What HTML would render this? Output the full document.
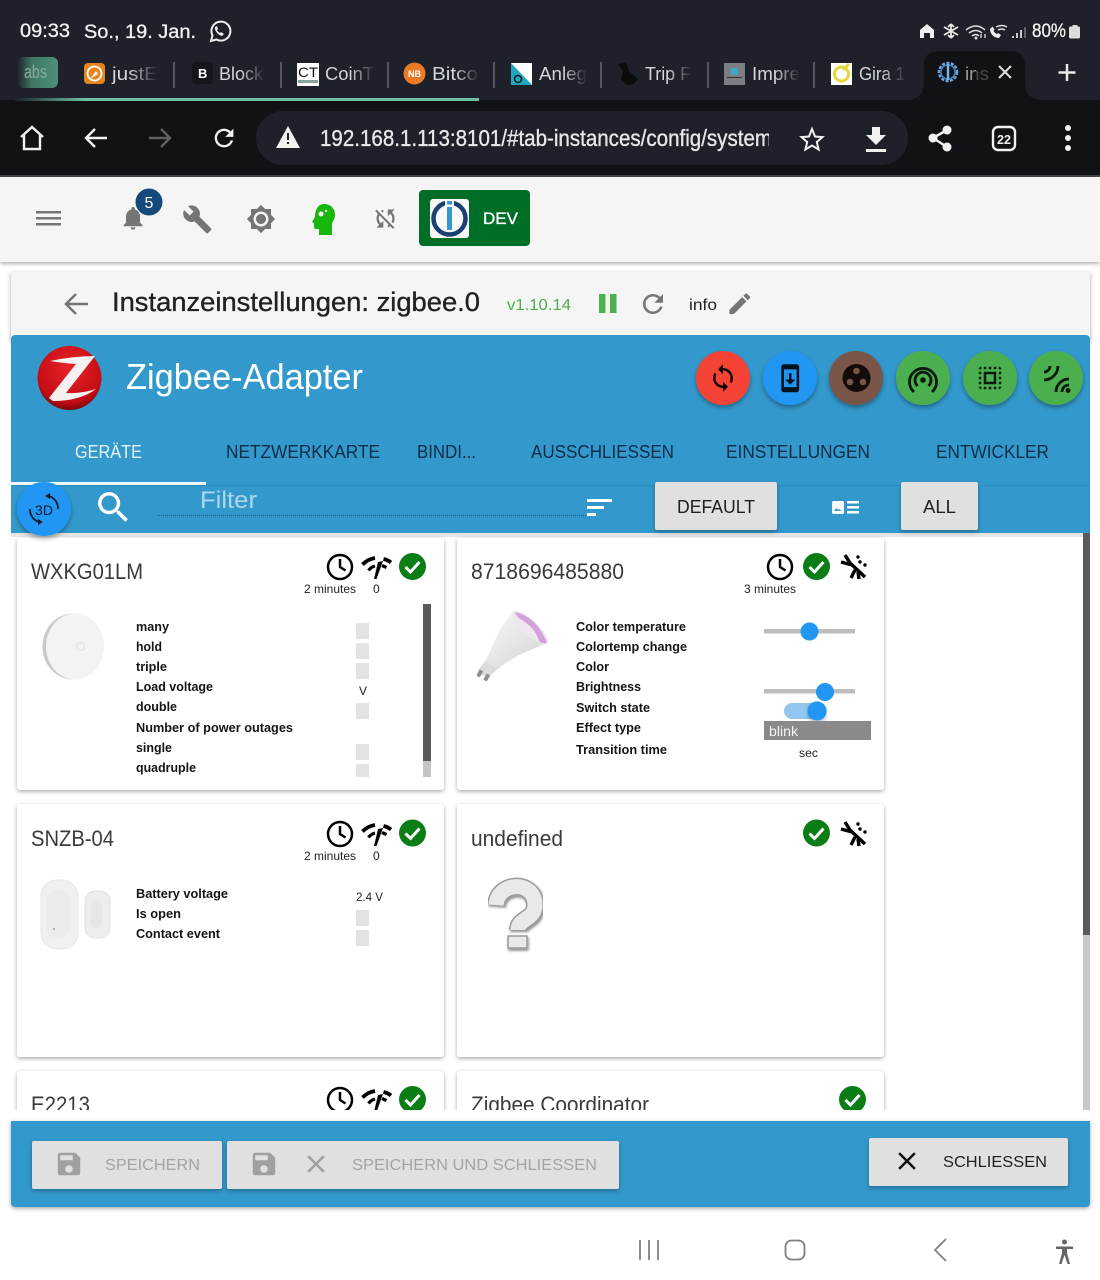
<!DOCTYPE html>
<html lang="de"><head><meta charset="utf-8"><title>Instanzeinstellungen: zigbee.0</title>
<style>
html,body{margin:0;padding:0;background:#fff;width:1100px;height:1280px;overflow:hidden}
svg{display:block}
text{font-family:"Liberation Sans",sans-serif;white-space:pre}
.l{font-size:13px;font-weight:700;fill:#151515}
.s{font-size:12px;fill:#222}
.t{font-size:22px;fill:#3a3a3a}
.tab{font-size:18px;fill:#0d2d47}
.bt{font-size:18px;fill:#d2d4d6}
</style></head><body>
<svg width="1100" height="1280" viewBox="0 0 1100 1280" xmlns="http://www.w3.org/2000/svg">
<defs>
<filter id="sh" x="-5%" y="-5%" width="110%" height="112%"><feDropShadow dx="0" dy="1.5" stdDeviation="2" flood-color="#000" flood-opacity=".35"/></filter>
<filter id="sh2" x="-20%" y="-20%" width="140%" height="150%"><feDropShadow dx="0" dy="2.5" stdDeviation="2.5" flood-color="#000" flood-opacity=".35"/></filter>
<filter id="sh3" x="-10%" y="-20%" width="120%" height="150%"><feDropShadow dx="0" dy="2" stdDeviation="2.5" flood-color="#000" flood-opacity=".3"/></filter>
<filter id="qs" x="-20%" y="-20%" width="140%" height="140%"><feDropShadow dx="1" dy="2" stdDeviation="1.2" flood-color="#000" flood-opacity=".45"/></filter>
<linearGradient id="fade"><stop offset="0" stop-color="#1e212a" stop-opacity="0"/><stop offset="1" stop-color="#1e212a"/></linearGradient>
<linearGradient id="pill"><stop offset="0" stop-color="#1e212a"/><stop offset=".35" stop-color="#3f7565"/><stop offset="1" stop-color="#4f8f7c"/></linearGradient>
<linearGradient id="prog"><stop offset="0" stop-color="#1e212a"/><stop offset=".15" stop-color="#6cbfa4"/><stop offset="1" stop-color="#6cbfa4"/></linearGradient>
<radialGradient id="zb" cx=".5" cy=".35" r=".7"><stop offset="0" stop-color="#e8232a"/><stop offset=".75" stop-color="#c40d14"/><stop offset="1" stop-color="#5e0508"/></radialGradient>
<linearGradient id="bulb" x1="0" y1="0" x2="1" y2="1"><stop offset="0" stop-color="#f8f8f8"/><stop offset="1" stop-color="#d4d4d4"/></linearGradient>
<clipPath id="urlclip"><rect x="300" y="115" width="469" height="46"/></clipPath>
<clipPath id="scroll"><rect x="11" y="533" width="1072" height="577"/></clipPath>
</defs>

<!-- top chrome -->
<rect width="1100" height="100" fill="#1e212a"/>
<rect y="100" width="1100" height="77" fill="#101216"/>
<rect y="175" width="1100" height="2" fill="#43464b"/>

<!-- status bar -->
<text x="20" y="37" font-size="19" fill="#f2f2f2" stroke="#f2f2f2" stroke-width=".3" textLength="50" lengthAdjust="spacingAndGlyphs">09:33</text>
<text x="84" y="38" font-size="19" fill="#f2f2f2" stroke="#f2f2f2" stroke-width=".3" textLength="112" lengthAdjust="spacingAndGlyphs">So., 19. Jan.</text>
<g fill="none" stroke="#eee" stroke-width="2"><path d="M211 41l1.500-5.500a9.500 9.500 0 1 1 4 4z"/><path d="M215 27c-1 3 3 8 7 9l2-2-3-2-1 1c-1-.5-2.500-2-3-3l1-1-1-3z" fill="#eee" stroke="none"/></g>
<path d="M920 38v-8l7-6 7 6v8h-4v-5h-6v5z" fill="#f0f0f0"/>
<g fill="none" stroke="#e8e8e8" stroke-width="1.800"><path d="M951 24v14M944 27l14 8M958 27l-14 8M951 24l-3 3M951 24l3 3M951 38l-3-3M951 38l3-3"/></g>
<g fill="none" stroke="#e0e0e0" stroke-width="1.500"><path d="M966 30q10-8 19 0M969 33q7-5 13 0M972 36q4-3 7 0"/></g><path d="M981 38v-4M985 34v4" stroke="#ddd" stroke-width="1.300"/><circle cx="976" cy="38" r="1.500" fill="#e0e0e0"/>
<path d="M990 29c0 5 4 9 9 9l2-3-3-2-1 1c-1.500-.5-3-2-3.500-3.500l1-1-2-3z" fill="#eee"/><path d="M996 27q6-3 11 0M998 30q3.500-2 7 0" fill="none" stroke="#ddd" stroke-width="1.500"/>
<path d="M1013 38v-2M1017 38v-5M1021 38v-8" stroke="#ddd" stroke-width="1.800"/><path d="M1025 38V27" stroke="#777" stroke-width="1.500"/>
<text x="1032" y="37" font-size="19" fill="#f2f2f2" stroke="#f2f2f2" stroke-width=".3" textLength="34" lengthAdjust="spacingAndGlyphs">80%</text>
<path d="M1069 28a1.500 1.500 0 0 1 1.500-1.500h2v-1.500h5v1.500h1a1.500 1.500 0 0 1 1.500 1.500v9a1.500 1.500 0 0 1-1.500 1.500h-8a1.500 1.500 0 0 1-1.500-1.500z" fill="#ddd"/>

<!-- tabs -->
<rect x="17" y="57" width="41" height="31" rx="6" fill="url(#pill)"/>
<text x="24" y="78" font-size="18" fill="#88a9a0" textLength="23" lengthAdjust="spacingAndGlyphs">abs</text>
<g fill="#54575d"><rect x="173" y="62" width="2" height="26"/><rect x="280" y="62" width="2" height="26"/><rect x="387" y="62" width="2" height="26"/><rect x="493" y="62" width="2" height="26"/><rect x="600" y="62" width="2" height="26"/><rect x="707" y="62" width="2" height="26"/><rect x="813" y="62" width="2" height="26"/></g>
<rect x="84" y="63" width="21" height="21" rx="4" fill="#e8841e"/><circle cx="94.500" cy="73.500" r="7" fill="none" stroke="#fff" stroke-width="1.800"/><path d="M90 79l6-8 2 3z" fill="#fff"/>
<rect x="192" y="62" width="21" height="22" rx="4" fill="#14161c"/><text x="198" y="78" font-size="13" font-weight="700" fill="#fff">B</text>
<rect x="297" y="63" width="22" height="23" fill="#fff"/><text x="298" y="77" font-size="14" fill="#111" textLength="20" lengthAdjust="spacingAndGlyphs">CT</text><rect x="298" y="80" width="20" height="3" fill="#8aa5a0"/>
<circle cx="414.500" cy="73.500" r="11" fill="#ec7a23"/><text x="408" y="77" font-size="9" font-weight="700" fill="#fff" textLength="13" lengthAdjust="spacingAndGlyphs">NB</text>
<path d="M511 63h21v22h-21z" fill="#fff"/><path d="M511 63l21 22h-21z" fill="#1ea7c2"/><circle cx="518" cy="79" r="3.500" fill="none" stroke="#111" stroke-width="1.500"/>
<path d="M618 64l8-2 3 9 9 8-4 5-7 1-6-6 2-8z" fill="#0c0c0d"/>
<rect x="724" y="63" width="21" height="22" fill="#7b7f83"/><rect x="731" y="68" width="7" height="7" rx="2" fill="#36acc6"/><rect x="727" y="77" width="15" height="1" fill="#333"/>
<rect x="831" y="63" width="21" height="22" fill="#fff"/><circle cx="841.500" cy="74" r="7" fill="none" stroke="#e5d63a" stroke-width="3"/><path d="M843 70l6-6" stroke="#e5d63a" stroke-width="3"/>
<text x="112" y="80" class="bt" textLength="46" lengthAdjust="spacingAndGlyphs">justE</text><rect x="128" y="60" width="30" height="28" fill="url(#fade)"/>
<text x="219" y="80" class="bt" textLength="44" lengthAdjust="spacingAndGlyphs">Block</text><rect x="240" y="60" width="25" height="28" fill="url(#fade)"/>
<text x="325" y="80" class="bt" textLength="49" lengthAdjust="spacingAndGlyphs">CoinT</text><rect x="350" y="60" width="25" height="28" fill="url(#fade)"/>
<text x="432" y="80" class="bt" textLength="46" lengthAdjust="spacingAndGlyphs">Bitco</text><rect x="455" y="60" width="24" height="28" fill="url(#fade)"/>
<text x="539" y="80" class="bt" textLength="48" lengthAdjust="spacingAndGlyphs">Anleg</text><rect x="563" y="60" width="24" height="28" fill="url(#fade)"/>
<text x="645" y="80" class="bt" textLength="46" lengthAdjust="spacingAndGlyphs">Trip F</text><rect x="668" y="60" width="24" height="28" fill="url(#fade)"/>
<text x="752" y="80" class="bt" textLength="48" lengthAdjust="spacingAndGlyphs">Impre</text><rect x="775" y="60" width="25" height="28" fill="url(#fade)"/>
<text x="859" y="80" class="bt" textLength="46" lengthAdjust="spacingAndGlyphs">Gira 1</text><rect x="882" y="60" width="24" height="28" fill="url(#fade)"/>
<path d="M906 100q18 0 18-18V66q0-15 15-15h71q15 0 15 15v16q0 18 18 18z" fill="#101216"/>
<circle cx="948" cy="72" r="9" fill="none" stroke="#6ea5d8" stroke-width="2.500" stroke-dasharray="3 1.500"/><circle cx="948" cy="72" r="7" fill="none" stroke="#3f7fc0" stroke-width="1.500"/><rect x="946.800" y="64" width="2.400" height="16" fill="#7ab8e8"/>
<text x="965" y="80" font-size="18" fill="#9a9ca0" textLength="24" lengthAdjust="spacingAndGlyphs">ins</text><rect x="976" y="60" width="14" height="28" fill="#101216" opacity=".6"/>
<path d="M999 66l12 12M1011 66l-12 12" stroke="#ddd" stroke-width="2"/>
<path d="M1067 64v17M1058.500 72.500h17" stroke="#e8e8e8" stroke-width="2.500"/>
<rect x="15" y="98" width="464" height="3" fill="url(#prog)"/>

<!-- toolbar -->
<g fill="none" stroke="#f1f1f1" stroke-width="2.400"><path d="M21 137l11-10 11 10M24 135v14h16v-14"/></g>
<path d="M107 138H87M95 129l-9 9 9 9" fill="none" stroke="#f1f1f1" stroke-width="2.400"/>
<path d="M149 138h20M161 129l9 9-9 9" fill="none" stroke="#5e6064" stroke-width="2.400"/>
<g transform="translate(210,124) scale(1.170)"><path fill="#f1f1f1" d="M17.650 6.350C16.200 4.900 14.210 4 12 4c-4.420 0-7.990 3.580-7.990 8s3.570 8 7.990 8c3.730 0 6.840-2.550 7.730-6h-2.080c-.82 2.330-3.040 4-5.650 4-3.310 0-6-2.690-6-6s2.690-6 6-6c1.660 0 3.140.69 4.220 1.780L13 11h7V4l-2.350 2.350z"/></g>
<rect x="256" y="111" width="652" height="54" rx="27" fill="#1e2129"/>
<path d="M288 126l12 22h-24z" fill="#f1f1f1"/><rect x="287" y="133" width="2" height="7" fill="#1e2129"/><rect x="287" y="142" width="2" height="2" fill="#1e2129"/>
<g clip-path="url(#urlclip)"><text x="320" y="146" font-size="23" fill="#e6e7e8" stroke="#e6e7e8" stroke-width=".35" textLength="452" lengthAdjust="spacingAndGlyphs">192.168.1.113:8101/#tab-instances/config/system</text></g>
<path d="M812 129l3 7.500 7.500.6-5.700 4.900 1.800 7.500-6.600-4-6.600 4 1.800-7.500-5.700-4.900 7.500-.6z" fill="none" stroke="#f1f1f1" stroke-width="2"/>
<path d="M872 127h8v8h6l-10 10-10-10h6zM866 149h20v3h-20z" fill="#f1f1f1"/>
<g fill="#f1f1f1"><circle cx="947" cy="130" r="4.500"/><circle cx="933" cy="138" r="4.500"/><circle cx="947" cy="147" r="4.500"/></g><path d="M947 130l-14 8 14 9" fill="none" stroke="#f1f1f1" stroke-width="2.500"/>
<rect x="993" y="127" width="22" height="23" rx="5" fill="none" stroke="#f1f1f1" stroke-width="2.400"/><text x="997" y="144" font-size="13" font-weight="700" fill="#f1f1f1" textLength="14" lengthAdjust="spacingAndGlyphs">22</text>
<g fill="#f1f1f1"><circle cx="1068" cy="128" r="3"/><circle cx="1068" cy="138" r="3"/><circle cx="1068" cy="148" r="3"/></g>

<!-- app header -->
<rect y="177" width="1100" height="85" fill="#f5f5f5" filter="url(#sh)"/>
<g fill="#757575"><rect x="36" y="211" width="25" height="2.500"/><rect x="36" y="217" width="25" height="2.500"/><rect x="36" y="223" width="25" height="2.500"/></g>
<g transform="translate(119,204) scale(1.170)"><path fill="#757575" d="M12 22c1.100 0 2-.9 2-2h-4c0 1.100.9 2 2 2zm6-6v-5c0-3.070-1.630-5.640-4.500-6.320V4c0-.83-.67-1.500-1.500-1.500s-1.500.67-1.500 1.500v.68C7.640 5.360 6 7.920 6 11v5l-2 2v1h16v-1l-2-2z"/></g>
<circle cx="149" cy="202" r="13.500" fill="#164a7a"/><text x="144.500" y="208" font-size="16" fill="#fff">5</text>
<g transform="translate(182,204) scale(1.280)"><path fill="#757575" d="M22.700 19l-9.100-9.100c.9-2.300.4-5-1.500-6.900-2-2-5-2.400-7.400-1.300L9 6 6 9 1.600 4.700C.4 7.100.9 10.100 2.900 12.100c1.900 1.900 4.600 2.400 6.900 1.500l9.100 9.100c.4.400 1 .4 1.400 0l2.300-2.300c.5-.4.5-1.100.1-1.400z"/></g>
<g transform="translate(246,204) scale(1.250)"><path fill="#757575" d="M20 15.310L23.310 12 20 8.690V4h-4.690L12 .69 8.690 4H4v4.690L.69 12 4 15.310V20h4.690L12 23.310 15.310 20H20v-4.690zM12 18c-3.310 0-6-2.690-6-6s2.690-6 6-6 6 2.690 6 6-2.690 6-6 6zm0-10c-2.210 0-4 1.790-4 4s1.790 4 4 4 4-1.790 4-4-1.790-4-4-4z"/></g>
<path d="M324 204c7 0 11 5 11 11 0 4-2 6-3 8v12h-13v-6h-3c-1.500 0-2-1-2-2v-4l-2-1 3-5c0-7 3-13 9-13z" fill="#17b70c"/><circle cx="321" cy="214" r="2.500" fill="#f5f5f5"/><circle cx="326" cy="211" r="1.200" fill="#f5f5f5"/>
<g transform="translate(372,205) scale(1.130)"><path fill="#757575" d="M10 6.350V4.260c-.8.210-1.550.54-2.230.96l1.460 1.460c.25-.12.5-.24.77-.33zm-7.140-.94l2.360 2.360C4.450 8.990 4 10.440 4 12c0 2.210.91 4.200 2.360 5.640L4 20h6v-6l-2.240 2.240C6.680 15.150 6 13.660 6 12c0-1 .25-1.940.68-2.770l8.080 8.080c-.25.130-.5.250-.77.340v2.090c.8-.21 1.550-.54 2.230-.96l2.360 2.360 1.270-1.270L4.140 4.140 2.860 5.410zM20 4h-6v6l2.240-2.240C17.320 8.850 18 10.340 18 12c0 1-.25 1.940-.68 2.770l1.460 1.460C19.550 15.010 20 13.560 20 12c0-2.210-.91-4.200-2.360-5.640L20 4z"/></g>
<rect x="419" y="190" width="111" height="56" rx="4" fill="#006e27"/>
<rect x="430" y="199" width="39" height="39" rx="3" fill="#f8f8f8"/>
<circle cx="449.500" cy="218.500" r="16" fill="none" stroke="#1b3f73" stroke-width="4.500"/><rect x="445" y="199" width="9" height="31" fill="#f8f8f8"/><rect x="447" y="207" width="5" height="23" fill="#3399cc"/><rect x="447" y="201" width="5" height="3.500" fill="#3399cc"/>
<text x="483" y="224" font-size="17" fill="#fff" stroke="#fff" stroke-width=".35" textLength="35" lengthAdjust="spacingAndGlyphs">DEV</text>

<!-- dialog title -->
<rect x="11" y="272" width="1079" height="70" fill="#f5f5f5" filter="url(#sh)"/>
<path d="M88 304H67M76 294l-10 10 10 10" fill="none" stroke="#757575" stroke-width="2.500"/>
<text x="112" y="311" font-size="27" fill="#212121" stroke="#212121" stroke-width=".35" textLength="368" lengthAdjust="spacingAndGlyphs">Instanzeinstellungen: zigbee.0</text>
<text x="507" y="310" font-size="16" fill="#4caf50" textLength="64" lengthAdjust="spacingAndGlyphs">v1.10.14</text>
<rect x="599" y="294" width="6.500" height="19" fill="#4caf50"/><rect x="610" y="294" width="6.500" height="19" fill="#4caf50"/>
<g transform="translate(638,289) scale(1.250)"><path fill="#757575" d="M17.650 6.350C16.200 4.900 14.210 4 12 4c-4.420 0-7.990 3.580-7.990 8s3.570 8 7.990 8c3.730 0 6.840-2.550 7.730-6h-2.080c-.82 2.330-3.040 4-5.650 4-3.310 0-6-2.690-6-6s2.690-6 6-6c1.660 0 3.140.69 4.220 1.780L13 11h7V4l-2.350 2.350z"/></g>
<text x="689" y="310" font-size="16" fill="#212121" textLength="28" lengthAdjust="spacingAndGlyphs">info</text>
<g transform="translate(726,290) scale(1.150)"><path fill="#757575" d="M3 17.250V21h3.750L17.810 9.940l-3.750-3.750L3 17.250zM20.710 7.040c.39-.39.39-1.020 0-1.410l-2.340-2.340c-.39-.39-1.020-.39-1.410 0l-1.830 1.830 3.750 3.750 1.830-1.830z"/></g>

<!-- content background -->
<rect x="11" y="533" width="1079" height="590" fill="#fff"/>
<rect x="11" y="533" width="1079" height="4" fill="#ccc" opacity=".5"/>
<rect x="1083" y="533" width="7" height="402" fill="#5a5a5a"/><rect x="1083" y="935" width="7" height="175" fill="#c8c8c8"/>

<!-- cards -->
<g clip-path="url(#scroll)">
<rect x="17" y="538" width="427" height="252" rx="3" fill="#fff" filter="url(#sh)"/>
<rect x="457" y="538" width="427" height="252" rx="3" fill="#fff" filter="url(#sh)"/>
<rect x="17" y="804" width="427" height="253" rx="3" fill="#fff" filter="url(#sh)"/>
<rect x="457" y="804" width="427" height="253" rx="3" fill="#fff" filter="url(#sh)"/>
<rect x="17" y="1071" width="427" height="253" rx="3" fill="#fff" filter="url(#sh)"/>
<rect x="457" y="1071" width="427" height="253" rx="3" fill="#fff" filter="url(#sh)"/>

<!-- card titles -->
<text x="31" y="579" class="t" textLength="112" lengthAdjust="spacingAndGlyphs">WXKG01LM</text>
<text x="471" y="579" class="t" textLength="153" lengthAdjust="spacingAndGlyphs">8718696485880</text>
<text x="31" y="846" class="t" textLength="83" lengthAdjust="spacingAndGlyphs">SNZB-04</text>
<text x="471" y="846" class="t" textLength="92" lengthAdjust="spacingAndGlyphs">undefined</text>
<text x="31" y="1112" class="t" textLength="59" lengthAdjust="spacingAndGlyphs">E2213</text>
<text x="471" y="1112" class="t" textLength="178" lengthAdjust="spacingAndGlyphs">Zigbee Coordinator</text>

<!-- clocks -->
<g fill="none" stroke="#000" stroke-width="2.500"><circle cx="340" cy="567" r="12"/><path d="M340 559v8l5.500 3.500"/><circle cx="780" cy="567" r="12"/><path d="M780 559v8l5.500 3.500"/><circle cx="340" cy="834" r="12"/><path d="M340 826v8l5.500 3.500"/><circle cx="340" cy="1100" r="12"/><path d="M340 1092v8l5.500 3.500"/></g>
<!-- signal -->
<g>
<path d="M362.500 564.500Q368 559 375 558M383.500 559Q388 560 391 562.500" fill="none" stroke="#000" stroke-width="3.800"/>
<path d="M368.500 570.500Q371 567 375 566M382 565.500L386.500 567.500" fill="none" stroke="#000" stroke-width="3.200"/>
<path d="M374 579l2.500 0 6.500-18-5 1z" fill="#000"/>
</g>
<g>
<path d="M362.500 831.500Q368 826 375 825M383.500 826Q388 827 391 829.500" fill="none" stroke="#000" stroke-width="3.800"/>
<path d="M368.500 837.500Q371 834 375 833M382 832.500L386.500 834.500" fill="none" stroke="#000" stroke-width="3.200"/>
<path d="M374 846l2.500 0 6.500-18-5 1z" fill="#000"/>
</g>
<g>
<path d="M362.500 1097.500Q368 1092 375 1091M383.500 1092Q388 1093 391 1095.500" fill="none" stroke="#000" stroke-width="3.800"/>
<path d="M368.500 1103.500Q371 1100 375 1099M382 1098.500L386.500 1100.500" fill="none" stroke="#000" stroke-width="3.200"/>
<path d="M374 1112l2.500 0 6.500-18-5 1z" fill="#000"/>
</g>
<!-- checks -->
<g fill="#0a7d14"><circle cx="412.500" cy="566.500" r="13.500"/><circle cx="816.500" cy="566.500" r="13.500"/><circle cx="412.500" cy="833" r="13.500"/><circle cx="816.500" cy="833" r="13.500"/><circle cx="412.500" cy="1099.500" r="13.500"/><circle cx="852.500" cy="1099.500" r="13.500"/></g>
<g fill="none" stroke="#fff" stroke-width="3"><path d="M405.500 567l5 5 9-10"/><path d="M809.500 567l5 5 9-10"/><path d="M405.500 833.500l5 5 9-10"/><path d="M809.500 833.500l5 5 9-10"/><path d="M405.500 1100l5 5 9-10"/><path d="M845.500 1100l5 5 9-10"/></g>
<!-- leak off -->
<g fill="none" stroke="#000" stroke-width="3.400"><path d="M850 563l15 14M845 555l5 8M841 562l11 3M855 570l-4 8M858 572l1 7"/></g><g fill="#000"><circle cx="860" cy="562" r="1.700"/><circle cx="865" cy="565" r="1.700"/><circle cx="858" cy="557" r="1.700"/></g>
<g fill="none" stroke="#000" stroke-width="3.400"><path d="M850 830l15 14M845 822l5 8M841 829l11 3M855 837l-4 8M858 839l1 7"/></g><g fill="#000"><circle cx="860" cy="829" r="1.700"/><circle cx="865" cy="832" r="1.700"/><circle cx="858" cy="824" r="1.700"/></g>

<!-- small labels -->
<text x="304" y="593" class="s" textLength="52" lengthAdjust="spacingAndGlyphs">2 minutes</text><text x="373" y="593" class="s">0</text>
<text x="744" y="593" class="s" textLength="52" lengthAdjust="spacingAndGlyphs">3 minutes</text>
<text x="304" y="860" class="s" textLength="52" lengthAdjust="spacingAndGlyphs">2 minutes</text><text x="373" y="860" class="s">0</text>

<!-- card 1 body -->
<ellipse cx="73" cy="646.500" rx="30.500" ry="33" fill="#c9c9c9"/><ellipse cx="75" cy="646.500" rx="29" ry="33" fill="#f3f3f3"/><rect x="77" y="643" width="7" height="7" rx="2" fill="none" stroke="#e0e0e0"/>
<text x="136" y="631" class="l" textLength="33" lengthAdjust="spacingAndGlyphs">many</text>
<text x="136" y="651" class="l" textLength="26" lengthAdjust="spacingAndGlyphs">hold</text>
<text x="136" y="671" class="l" textLength="31" lengthAdjust="spacingAndGlyphs">triple</text>
<text x="136" y="691" class="l" textLength="77" lengthAdjust="spacingAndGlyphs">Load voltage</text>
<text x="136" y="711" class="l" textLength="41" lengthAdjust="spacingAndGlyphs">double</text>
<text x="136" y="732" class="l" textLength="157" lengthAdjust="spacingAndGlyphs">Number of power outages</text>
<text x="136" y="752" class="l" textLength="36" lengthAdjust="spacingAndGlyphs">single</text>
<text x="136" y="772" class="l" textLength="60" lengthAdjust="spacingAndGlyphs">quadruple</text>
<g fill="#e3e3e3"><rect x="356" y="623" width="13" height="16"/><rect x="356" y="643" width="13" height="16"/><rect x="356" y="663" width="13" height="16"/><rect x="356" y="703" width="13" height="16"/><rect x="356" y="744" width="13" height="16"/><rect x="356" y="764" width="13" height="13"/></g>
<text x="359" y="695" class="s">V</text>
<rect x="423" y="604" width="8" height="157" fill="#5a5a5a"/><rect x="423" y="761" width="8" height="16" fill="#c4c4c4"/>

<!-- card 2 body -->
<path d="M486 660l-8 10q2 8 13 5l10-9z" fill="#dcdcdc"/><rect x="478" y="670" width="4" height="7" rx="1" fill="#8f8f8f" transform="rotate(30 480 673)"/><rect x="485" y="674" width="4" height="7" rx="1" fill="#8f8f8f" transform="rotate(30 487 677)"/>
<path d="M513 612q-13 15-20 33l-7 15q6 9 15 6 8-5 16-10 15-7 30-13z" fill="url(#bulb)"/>
<ellipse cx="530" cy="627.500" rx="23" ry="7.500" transform="rotate(42 530 627.500)" fill="#efe6f0"/>
<path d="M515 612q22 5 32 31-5 1-8-2-4-14-19-22-4-3-5-7z" fill="#d3a2da"/>

<text x="576" y="631" class="l" textLength="110" lengthAdjust="spacingAndGlyphs">Color temperature</text>
<text x="576" y="651" class="l" textLength="111" lengthAdjust="spacingAndGlyphs">Colortemp change</text>
<text x="576" y="671" class="l" textLength="33" lengthAdjust="spacingAndGlyphs">Color</text>
<text x="576" y="691" class="l" textLength="65" lengthAdjust="spacingAndGlyphs">Brightness</text>
<text x="576" y="712" class="l" textLength="74" lengthAdjust="spacingAndGlyphs">Switch state</text>
<text x="576" y="732" class="l" textLength="65" lengthAdjust="spacingAndGlyphs">Effect type</text>
<text x="576" y="754" class="l" textLength="91" lengthAdjust="spacingAndGlyphs">Transition time</text>
<rect x="764" y="629" width="91" height="4.500" fill="#bdbdbd"/><circle cx="809.500" cy="631.500" r="9" fill="#2196f3"/>
<rect x="764" y="689" width="91" height="4.500" fill="#bdbdbd"/><circle cx="825" cy="692" r="9" fill="#2196f3"/>
<rect x="784" y="703" width="42" height="16" rx="8" fill="#90c6f0"/><circle cx="817" cy="711" r="9.500" fill="#2196f3" filter="url(#sh)"/>
<rect x="764" y="721" width="107" height="19" fill="#8a8a8a"/>
<text x="769" y="736" font-size="14" fill="#f5f5f5" textLength="29" lengthAdjust="spacingAndGlyphs">blink</text>
<text x="799" y="757" class="s" textLength="19" lengthAdjust="spacingAndGlyphs">sec</text>

<!-- card 3 body -->
<rect x="41" y="880" width="37" height="69" rx="16" fill="#f0f0f0" stroke="#e6e6e6"/><rect x="46" y="890" width="24" height="48" rx="11" fill="#ececec"/><circle cx="54" cy="929" r="1" fill="#999"/>
<rect x="85" y="891" width="25" height="47" rx="10" fill="#ededed" stroke="#e2e2e2"/><rect x="91" y="900" width="11" height="28" rx="5" fill="#e6e6e6"/>
<text x="136" y="898" class="l" textLength="92" lengthAdjust="spacingAndGlyphs">Battery voltage</text>
<text x="136" y="918" class="l" textLength="45" lengthAdjust="spacingAndGlyphs">Is open</text>
<text x="136" y="938" class="l" textLength="84" lengthAdjust="spacingAndGlyphs">Contact event</text>
<text x="356" y="901" class="s" textLength="27" lengthAdjust="spacingAndGlyphs">2.4 V</text>
<g fill="#e3e3e3"><rect x="356" y="910" width="13" height="16"/><rect x="356" y="930" width="13" height="16"/></g>

<!-- card 4 question -->
<g filter="url(#qs)">
<path d="M496 905C498 881 535 880 535 905C535 920 518 918 518 930" fill="none" stroke="#9a9a9a" stroke-width="18"/>
<path d="M496 905C498 881 535 880 535 905C535 920 518 918 518 930" fill="none" stroke="#e9e9e9" stroke-width="15"/>
<rect x="508" y="936" width="19" height="12" fill="#e9e9e9" stroke="#9a9a9a" stroke-width="1.500"/>
</g>
</g>

<!-- blue panel -->
<path d="M11 339a4 4 0 0 1 4-4h1071a4 4 0 0 1 4 4v194H11z" fill="#3399cc"/>
<circle cx="69.500" cy="378" r="32" fill="url(#zb)"/>
<path d="M50 361q24-5 45-5L66 393q14 1 30-4-16 12-43 12l-4-3 27-34q-14-1-26-3z" fill="#f6f1f1"/>
<text x="126" y="389" font-size="36" fill="#fff" textLength="237" lengthAdjust="spacingAndGlyphs">Zigbee-Adapter</text>

<g filter="url(#sh2)"><circle cx="723" cy="378" r="27" fill="#f44336"/><circle cx="790" cy="378" r="27" fill="#2196f3"/><circle cx="856" cy="378" r="27" fill="#795548"/><circle cx="923" cy="378" r="27" fill="#4caf50"/><circle cx="990" cy="378" r="27" fill="#4caf50"/><circle cx="1056" cy="378" r="27" fill="#4caf50"/></g>
<g transform="translate(708,363) scale(1.250)"><path fill="#180606" d="M12 4V1L8 5l4 4V6c3.310 0 6 2.690 6 6 0 1.010-.25 1.970-.7 2.800l1.460 1.460C19.540 15.030 20 13.570 20 12c0-4.420-3.580-8-8-8zm0 14c-3.310 0-6-2.690-6-6 0-1.010.25-1.970.7-2.800L5.240 7.740C4.460 8.970 4 10.430 4 12c0 4.420 3.580 8 8 8v3l4-4-4-4v3z"/></g>
<g transform="translate(775,363) scale(1.270)"><path fill="#04121e" d="M17 1.010L7 1c-1.100 0-2 .9-2 2v18c0 1.100.9 2 2 2h10c1.100 0 2-.9 2-2V3c0-1.100-.9-1.990-2-1.990zM17 19H7V5h10v14zm-1-6h-3V8h-2v5H8l4 4 4-4z"/></g>
<circle cx="856.500" cy="378" r="14" fill="#140c0a"/><circle cx="856.500" cy="371" r="3.300" fill="#795548"/><circle cx="850" cy="382" r="3.300" fill="#795548"/><circle cx="863" cy="382" r="3.300" fill="#795548"/>
<g fill="none" stroke="#0a1a0b" stroke-width="2.800"><path d="M914 392a13.500 13.500 0 1 1 18 0"/><path d="M917.500 386a8 8 0 1 1 11 0"/></g><circle cx="923" cy="380" r="2.800" fill="#0a1a0b"/>
<g transform="translate(975,363) scale(1.250)"><path fill="#0a1a0b" d="M3 5h2V3c-1.100 0-2 .9-2 2zm0 8h2v-2H3v2zm4 8h2v-2H7v2zM3 9h2V7H3v2zm10-6h-2v2h2V3zm6 0v2h2c0-1.100-.9-2-2-2zM5 21v-2H3c0 1.100.9 2 2 2zm-2-4h2v-2H3v2zM9 3H7v2h2V3zm2 18h2v-2h-2v2zm8-8h2v-2h-2v2zm0 8c1.100 0 2-.9 2-2h-2v2zm0-12h2V7h-2v2zm0 8h2v-2h-2v2zm-4 4h2v-2h-2v2zm0-16h2V3h-2v2zM7 17h10V7H7v10zm2-8h6v6H9V9z"/></g>
<g fill="none" stroke="#0a1a0b" stroke-width="2.800"><path d="M1050 366A6 6 0 0 1 1044 372"/><path d="M1058 366A14 14 0 0 1 1044 380"/><path d="M1056 392A13 13 0 0 1 1069 379"/><path d="M1062 392A7 7 0 0 1 1069 385"/></g><circle cx="1068" cy="390.500" r="2.500" fill="#0a1a0b"/>

<text x="75" y="458" font-size="18" fill="#e4f2f9" textLength="67" lengthAdjust="spacingAndGlyphs">GERÄTE</text>
<text x="226" y="458" class="tab" textLength="154" lengthAdjust="spacingAndGlyphs">NETZWERKKARTE</text>
<text x="417" y="458" class="tab" textLength="59" lengthAdjust="spacingAndGlyphs">BINDI...</text>
<text x="531" y="458" class="tab" textLength="143" lengthAdjust="spacingAndGlyphs">AUSSCHLIESSEN</text>
<text x="726" y="458" class="tab" textLength="144" lengthAdjust="spacingAndGlyphs">EINSTELLUNGEN</text>
<text x="936" y="458" class="tab" textLength="113" lengthAdjust="spacingAndGlyphs">ENTWICKLER</text>
<rect x="11" y="485" width="1079" height="1" fill="#2f8dbd"/>
<rect x="11" y="482" width="195" height="3" fill="#f0f8fc"/>

<circle cx="44" cy="509" r="27" fill="#2196f3" filter="url(#sh2)"/>
<text x="35" y="515" font-size="14" fill="#0e1d2c" textLength="18" lengthAdjust="spacingAndGlyphs">3D</text>
<g fill="none" stroke="#0e1d2c" stroke-width="1.800"><path d="M49 496a13 13 0 0 1 9 13"/><path d="M39 522a13 13 0 0 1-9-13"/></g><path d="M45 496l5-3v6zM43 522l-5 3v-6z" fill="#0e1d2c"/>
<g transform="translate(93,487) scale(1.700)"><path fill="#fff" d="M15.500 14h-.79l-.28-.27C15.410 12.590 16 11.110 16 9.500 16 5.910 13.090 3 9.500 3S3 5.910 3 9.500 5.910 16 9.500 16c1.610 0 3.090-.59 4.230-1.570l.27.280v.79l5 4.990L20.490 19l-4.990-5zm-6 0C7.010 14 5 11.990 5 9.500S7.010 5 9.500 5 14 7.010 14 9.500 11.990 14 9.500 14z"/></g>
<text x="200" y="508" font-size="24" fill="#aed5ea" textLength="57" lengthAdjust="spacingAndGlyphs">Filter</text>
<path d="M157 515.500H590" stroke="#1f5d7e" stroke-width="1" stroke-dasharray="1 1"/>
<g fill="#fff"><rect x="587" y="499" width="25" height="3"/><rect x="587" y="506" width="17" height="3"/><rect x="587" y="513" width="9" height="3"/></g>
<rect x="655" y="482" width="122" height="48" rx="2" fill="#e0e0e0" filter="url(#sh3)"/>
<text x="677" y="513" font-size="18" fill="#212121" textLength="78" lengthAdjust="spacingAndGlyphs">DEFAULT</text>
<rect x="832" y="501" width="12" height="13" rx="2" fill="#fff"/><path d="M834 511l2.500-3 2 2 1-1 2 2z" fill="#3399cc"/><g fill="#fff"><rect x="847" y="501" width="12" height="2.500"/><rect x="847" y="506" width="12" height="2.500"/><rect x="847" y="511" width="12" height="2.500"/></g>
<rect x="901" y="482" width="77" height="48" rx="2" fill="#e0e0e0" filter="url(#sh3)"/>
<text x="923" y="513" font-size="18" fill="#212121" textLength="33" lengthAdjust="spacingAndGlyphs">ALL</text>

<!-- footer -->
<path d="M11 1121h1079v82a4 4 0 0 1-4 4H15a4 4 0 0 1-4-4z" fill="#3399cc" filter="url(#sh)"/>
<rect x="32" y="1141" width="190" height="48" rx="2" fill="#e0e0e0" filter="url(#sh3)"/>
<rect x="227" y="1141" width="392" height="48" rx="2" fill="#e0e0e0" filter="url(#sh3)"/>
<rect x="869" y="1138" width="199" height="48" rx="2" fill="#e0e0e0" filter="url(#sh3)"/>
<g transform="translate(54,1149) scale(1.250)"><path fill="#a0a0a0" d="M17 3H5c-1.110 0-2 .9-2 2v14c0 1.100.89 2 2 2h14c1.100 0 2-.9 2-2V7l-4-4zm-5 16c-1.660 0-3-1.340-3-3s1.340-3 3-3 3 1.340 3 3-1.340 3-3 3zm3-10H5V5h10v4z"/></g>
<g transform="translate(249,1149) scale(1.250)"><path fill="#a0a0a0" d="M17 3H5c-1.110 0-2 .9-2 2v14c0 1.100.89 2 2 2h14c1.100 0 2-.9 2-2V7l-4-4zm-5 16c-1.660 0-3-1.340-3-3s1.340-3 3-3 3 1.340 3 3-1.340 3-3 3zm3-10H5V5h10v4z"/></g>
<g transform="translate(301,1149) scale(1.250)"><path fill="#a0a0a0" d="M19 6.410L17.590 5 12 10.590 6.410 5 5 6.410 10.590 12 5 17.590 6.410 19 12 13.410 17.590 19 19 17.590 13.410 12z"/></g>
<g transform="translate(892,1146) scale(1.250)"><path fill="#111" d="M19 6.410L17.590 5 12 10.590 6.410 5 5 6.410 10.590 12 5 17.590 6.410 19 12 13.410 17.590 19 19 17.590 13.410 12z"/></g>
<text x="105" y="1170" font-size="16" fill="#a4a4a4" textLength="95" lengthAdjust="spacingAndGlyphs">SPEICHERN</text>
<text x="352" y="1170" font-size="16" fill="#a4a4a4" textLength="245" lengthAdjust="spacingAndGlyphs">SPEICHERN UND SCHLIESSEN</text>
<text x="943" y="1167" font-size="16" fill="#212121" textLength="104" lengthAdjust="spacingAndGlyphs">SCHLIESSEN</text>

<!-- android nav -->
<g fill="none" stroke="#808080" stroke-width="1.800"><path d="M640 1240v20M649 1240v20M658 1240v20"/><rect x="785.500" y="1240.500" width="19" height="19" rx="6"/><path d="M946 1239l-11 11 11 11"/></g>
<g fill="#666"><circle cx="1064.500" cy="1242" r="2.500"/><path d="M1056 1246.500h17v2.500h-6v4l3 11h-2.500l-3-9-3 9H1059l3-11v-4h-6z"/></g>
</svg>
</body></html>
